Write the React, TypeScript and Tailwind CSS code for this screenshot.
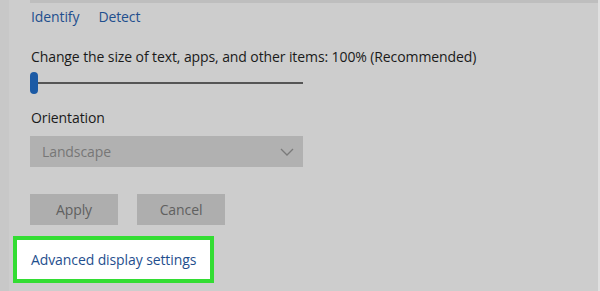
export default function App() {
    return (
        <div className="w-[600px] h-[291px] bg-[#cdcdcd] flex overflow-hidden tracking-[-0.1px]" style={{ fontFamily: '"Open Sans", "Noto Sans", sans-serif' }}>
            {/* left edge strip */}
            <div className="w-[9px] h-full bg-[#c8c8c8]" />
            <div className="flex-1 flex flex-col">
                {/* top strip */}
                <div className="h-[3px] ml-[21px] bg-[#bebebe]" />
                <div className="flex-1 flex flex-col pl-[4px]">
                    {/* links */}
                    <div className="flex gap-[19px] mt-[5px] ml-[18px] text-[14px] leading-[18px] text-[#1f4f8e]">
                        <span>Identify</span>
                        <span>Detect</span>
                    </div>

                    {/* scale */}
                    <div className="mt-[22px] ml-[18px] text-[14px] leading-[18px] text-[#1a1a1a]">
                        Change the size of text, apps, and other items: 100% (Recommended)
                    </div>
                    <div className="mt-[6px] ml-[17px] w-[273px] h-[22px] flex items-center">
                        <div className="w-[8px] h-[22px] rounded-full bg-[#1b5aa5]" />
                        <div className="flex-1 h-[2px] bg-[#555555]" />
                    </div>

                    {/* orientation */}
                    <div className="mt-[15px] ml-[18px] text-[14px] leading-[18px] text-[#1a1a1a]">Orientation</div>
                    <div className="mt-[9px] ml-[17px] w-[273px] h-[31px] bg-[#b1b1b1] flex items-center justify-between pl-[12px] pr-[8px] text-[14px] text-[#777777]">
                        <span>Landscape</span>
                        <svg width="14" height="8" viewBox="0 0 14 8" fill="none" className="mr-[1px]">
                            <path d="M1 1 L7 7 L13 1" stroke="#7a7a7a" strokeWidth="1.3" />
                        </svg>
                    </div>

                    {/* buttons */}
                    <div className="mt-[27px] ml-[17px] flex gap-[19px]">
                        <div className="w-[88px] h-[31px] bg-[#aeaeae] flex items-center justify-center text-[14px] text-[#606060]">Apply</div>
                        <div className="w-[88px] h-[31px] bg-[#aeaeae] flex items-center justify-center text-[14px] text-[#606060]">Cancel</div>
                    </div>

                    {/* highlighted link */}
                    <div className="mt-[11px] w-[201px] h-[47px] border-[4px] border-[#33dd33] bg-white flex items-center pl-[14px] text-[14px] text-[#1f4f8e]">
                        Advanced display settings
                    </div>
                </div>
            </div>
            {/* right edge */}
            <div className="w-[2px] h-full bg-[#e0e0e0]" />
        </div>
    );
}
